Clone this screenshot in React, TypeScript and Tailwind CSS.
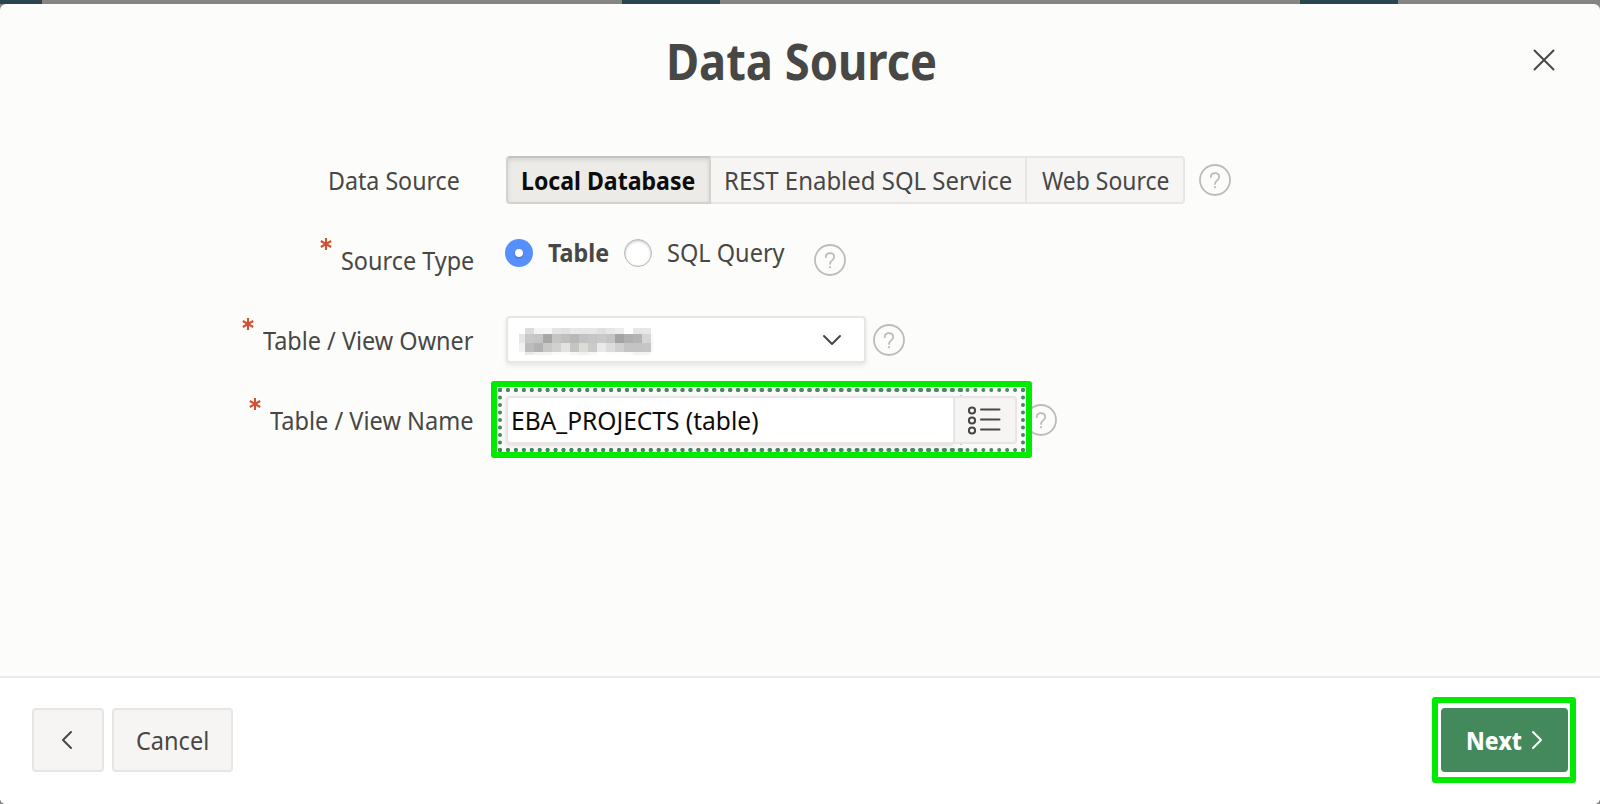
import type { ReactNode } from "react";

function HelpIcon() {
  return (
    <svg width="32" height="32" viewBox="0 0 32 32" fill="none" stroke="#bcbcbb" strokeWidth="1.8" strokeLinecap="round" className="shrink-0">
      <circle cx="16" cy="16" r="15" />
      <path d="M11.8 13.2C11.8 10.8 13.5 9.1 16 9.1s4.2 1.7 4.2 3.9c0 3.4-4.2 3.3-4.2 6.9" />
      <circle cx="16" cy="23.2" r="1.1" fill="#bcbcbb" stroke="none" />
    </svg>
  );
}

function Asterisk() {
  return (
    <svg width="12" height="12" viewBox="0 0 12 12" fill="none" stroke="#cf5235" strokeWidth="2.1" className="relative -top-4 shrink-0">
      <path d="M6 0v12M0.8 3l10.4 6M0.8 9l10.4-6" />
    </svg>
  );
}

function Fit({ box, scale, children }: { box: string; scale: string; children: ReactNode }) {
  return (
    <span className={`block shrink-0 leading-8 whitespace-nowrap ${box}`}>
      <span className={`inline-block origin-left ${scale}`}>{children}</span>
    </span>
  );
}

function Row({ label, required, children }: { label: ReactNode; required?: boolean; children: ReactNode }) {
  return (
    <div className="flex h-20 items-center">
      <div className={`flex items-center justify-end gap-[9px] ${required ? "mr-[33px] w-[473px]" : "mr-[46px] w-[460px]"}`}>
        {required && <Asterisk />}
        {label}
      </div>
      {children}
    </div>
  );
}

/* Two overlapping dotted focus outlines: one round the text input, one round the whole field. */
function FocusOutline() {
  return (
    <svg width="527" height="64" viewBox="0 0 527 64" fill="none" stroke="#43895c" strokeWidth="4" strokeLinecap="round" className="absolute -top-2 -left-2">
      <path d="M2 2H526M2 62H526" strokeDasharray="0 7.924" />
      <path d="M2 2H464M2 62H464" strokeDasharray="0 7.948" />
      <path d="M2 2V63M525 2V63M463 2V63" strokeDasharray="0 7.5" />
    </svg>
  );
}

const redacted = [
  ["#ffffff", "#dcdcdc", "#f4f4f4", "#f5f5f5", "#e4e4e4", "#e0e0e0", "#e8e8e8", "#e6e6e6", "#e7e7e6", "#e0e0df", "#e7e7e7", "#ececec", "#ffffff", "#e6e6e6", "#e7e7e7", "#ffffff"],
  ["#e6e6e6", "#c8c8c8", "#c5c5c5", "#a7a7a6", "#c6c5c3", "#bfbfbe", "#b8b8b8", "#c2c2c2", "#c6c6c6", "#cac9c7", "#c4c4c4", "#a3a3a3", "#afafaf", "#b4b4b2", "#d5d5d5", "#fafafa"],
  ["#f2f2f2", "#bcbcbc", "#b2b2b1", "#c8c8c8", "#d1d1d1", "#e2e2e2", "#c5c5c4", "#dbdbd8", "#cacaca", "#e9e9e9", "#dcdcdc", "#d0d0d0", "#c4c4c4", "#c4c4c4", "#c5c5c5", "#f8f8f8"],
  ["#ffffff", "#e9e9e9", "#f2f2f2", "#f3f3f3", "#f9f9f9", "#fbfbfb", "#f6f6f6", "#f1f1f1", "#f8f8f8", "#ffffff", "#fcfcfc", "#fdfdfd", "#fbfbfb", "#f3f3f3", "#f5f5f5", "#ffffff"],
];

function RedactedValue() {
  return (
    <div className="grid grid-cols-[6px_repeat(14,9px)_3px] grid-rows-[6px_9px_9px_3px]">
      {redacted.flat().map((c, i) => (
        <span key={i} style={{ backgroundColor: c }} />
      ))}
    </div>
  );
}

export default function App() {
  return (
    <div className="flex h-[804px] w-[1600px] flex-col overflow-hidden bg-[#858583] font-['Noto_Sans',sans-serif] text-[24.5px] text-[#474745]">
      <div className="flex h-1 shrink-0">
        <div className="w-[42px] bg-[#2b454f]" />
        <div className="w-[580px]" />
        <div className="w-[98px] bg-[#2b454f]" />
        <div className="w-[580px]" />
        <div className="w-[98px] bg-[#2b454f]" />
      </div>

      <div className="flex min-h-0 flex-1 flex-col overflow-hidden rounded-[6px] bg-[#fcfcfa]">
        <header className="flex h-[136px] shrink-0 items-start justify-between pt-[25px] pr-[45px]">
          <div className="w-[22px]" />
          <h1 className="ml-[45px] w-[268px] text-[50px] leading-[64px] font-bold whitespace-nowrap">
            <span className="inline-block origin-left scale-x-[0.905]">Data Source</span>
          </h1>
          <svg width="22" height="22" viewBox="0 0 22 22" fill="none" stroke="#474745" strokeWidth="2" strokeLinecap="round" className="mt-5">
            <path d="M1.5 1.5l19 19M20.5 1.5l-19 19" />
          </svg>
        </header>

        <main className="flex-1">
          <Row label={<Fit box="w-[132px] pt-[2px]" scale="scale-x-[0.947]">Data Source</Fit>}>
            <div className="flex h-12">
              <div className="flex w-[205px] items-center rounded-l-[4px] border-2 border-[#d3d2cf] border-t-[#c4c3c0] bg-[#ecebe7] pl-[13px] font-bold text-[#0c0c0b] shadow-[inset_0_2px_4px_rgba(0,0,0,0.1)]">
                <Fit box="w-[172px] pt-[2px]" scale="scale-x-[0.942]">Local Database</Fit>
              </div>
              <div className="flex w-[316px] items-center border-y-2 border-r-2 border-[#e7e6e4] bg-[#f6f5f4] pl-[13px]">
                <Fit box="w-[286px] pt-[2px]" scale="scale-x-[0.977]">REST Enabled SQL Service</Fit>
              </div>
              <div className="flex w-[158px] items-center rounded-r-[4px] border-y-2 border-r-2 border-[#e7e6e4] bg-[#f6f5f4] pl-[15px]">
                <Fit box="w-[126px] pt-[2px]" scale="scale-x-[0.935]">Web Source</Fit>
              </div>
            </div>
            <div className="ml-[14px]">
              <HelpIcon />
            </div>
          </Row>

          <Row required label={<Fit box="w-[132px] pt-[2px]" scale="scale-x-[0.955]">Source Type</Fit>}>
            <div className="-ml-px flex items-center pb-[15px]">
              <span className="flex size-7 items-center justify-center rounded-full bg-[#5690ff]">
                <span className="size-2 rounded-full bg-white shadow-[0_1px_2px_rgba(0,0,0,0.3)]" />
              </span>
              <span className="ml-[15px] font-bold">
                <Fit box="w-[61px]" scale="scale-x-[0.95]">Table</Fit>
              </span>
              <span className="ml-[15px] size-7 rounded-full border border-[#b5b5b4] bg-white shadow-[inset_0_1px_3px_rgba(0,0,0,0.25)]" />
              <span className="ml-[15px]">
                <Fit box="w-[119px]" scale="scale-x-[0.96]">SQL Query</Fit>
              </span>
            </div>
            <div className="ml-[28px]">
              <HelpIcon />
            </div>
          </Row>

          <Row required label={<Fit box="w-[210px] pt-[2px]" scale="scale-x-[0.957]">Table / View Owner</Fit>}>
            <div className="-mt-px flex h-[47px] w-[360px] items-center justify-between rounded-[4px] border-2 border-[#e7e6e2] bg-white pr-[22px] pl-[11px] shadow-[0_3px_5px_rgba(0,0,0,0.08)]">
              <div className="pt-[3px]">
                <RedactedValue />
              </div>
              <svg width="20" height="12" viewBox="0 0 20 12" fill="none" stroke="#474745" strokeWidth="2" strokeLinecap="round" strokeLinejoin="round">
                <path d="M2 2l8 8 8-8" />
              </svg>
            </div>
            <div className="ml-[7px]">
              <HelpIcon />
            </div>
          </Row>

          <Row required label={<Fit box="w-[203px] pt-[2px]" scale="scale-x-[0.962]">Table / View Name</Fit>}>
            <div className="relative z-10 flex h-12 w-[511px]">
              <div className="absolute -inset-x-[9px] -inset-y-[9px] bg-[#fbfafa]" />
              <FocusOutline />
              <div className="relative flex w-[447px] items-center rounded-l-[4px] border-2 border-r-0 border-[#e7e6e2] bg-white pl-[3px] text-[#0c0c0b] shadow-[0_2px_4px_rgba(60,20,20,0.12)]">
                <Fit box="w-[250px] pt-[2px]" scale="scale-x-[1.002]">EBA_PROJECTS (table)</Fit>
              </div>
              <div className="relative flex w-[64px] items-center justify-center rounded-[4px] rounded-l-none border-2 border-[#e7e6e4] bg-[#f6f5f4] pr-[3px] pb-px">
                <svg width="34" height="30" viewBox="0 0 34 30" fill="none" stroke="#474745" strokeWidth="2" strokeLinecap="round">
                  <circle cx="5" cy="5.5" r="3.1" />
                  <circle cx="5" cy="15.5" r="3.1" />
                  <circle cx="5" cy="25.5" r="3.1" />
                  <path d="M14 4.5h18.5M14 14.5h18.5M14 24.5h18.5" />
                </svg>
              </div>
              <div className="absolute -top-[15px] -right-[15px] -bottom-[14px] -left-[15px] rounded-[3px] border-[6px] border-[#00eb00]" />
            </div>
            <div className="ml-2">
              <HelpIcon />
            </div>
          </Row>
        </main>

        <footer className="flex h-32 shrink-0 items-center gap-2 border-t-2 border-[#ebebeb] bg-white px-8 pb-[2px]">
          <button className="flex h-16 w-[72px] items-center justify-center rounded-[4px] border-2 border-[#e7e6e4] bg-[#f6f5f4]">
            <svg width="12" height="20" viewBox="0 0 12 20" fill="none" stroke="#474745" strokeWidth="2" strokeLinecap="round" strokeLinejoin="round" className="-ml-[2px]">
              <path d="M10 2l-8 8 8 8" />
            </svg>
          </button>
          <button className="flex h-16 w-[121px] items-center rounded-[4px] border-2 border-[#e7e6e4] bg-[#f6f5f4] pl-[22px]">
            <Fit box="w-[72px] pt-[2px]" scale="scale-x-[0.96]">Cancel</Fit>
          </button>
          <div className="relative ml-auto">
            <button className="flex h-16 w-[127px] items-center rounded-[4px] bg-[#43895c] pl-5 font-extrabold text-white">
              <Fit box="w-[70px] pt-[2px]" scale="scale-x-[0.93]">Next</Fit>
              <svg width="12" height="20" viewBox="0 0 12 20" fill="none" stroke="#ffffff" strokeWidth="2" strokeLinecap="round" strokeLinejoin="round">
                <path d="M2 2l8 8-8 8" />
              </svg>
            </button>
            <div className="absolute -top-[11px] -right-[8px] -bottom-[11px] -left-[9px] rounded-[3px] border-[6px] border-[#00eb00]" />
          </div>
        </footer>
      </div>
    </div>
  );
}
